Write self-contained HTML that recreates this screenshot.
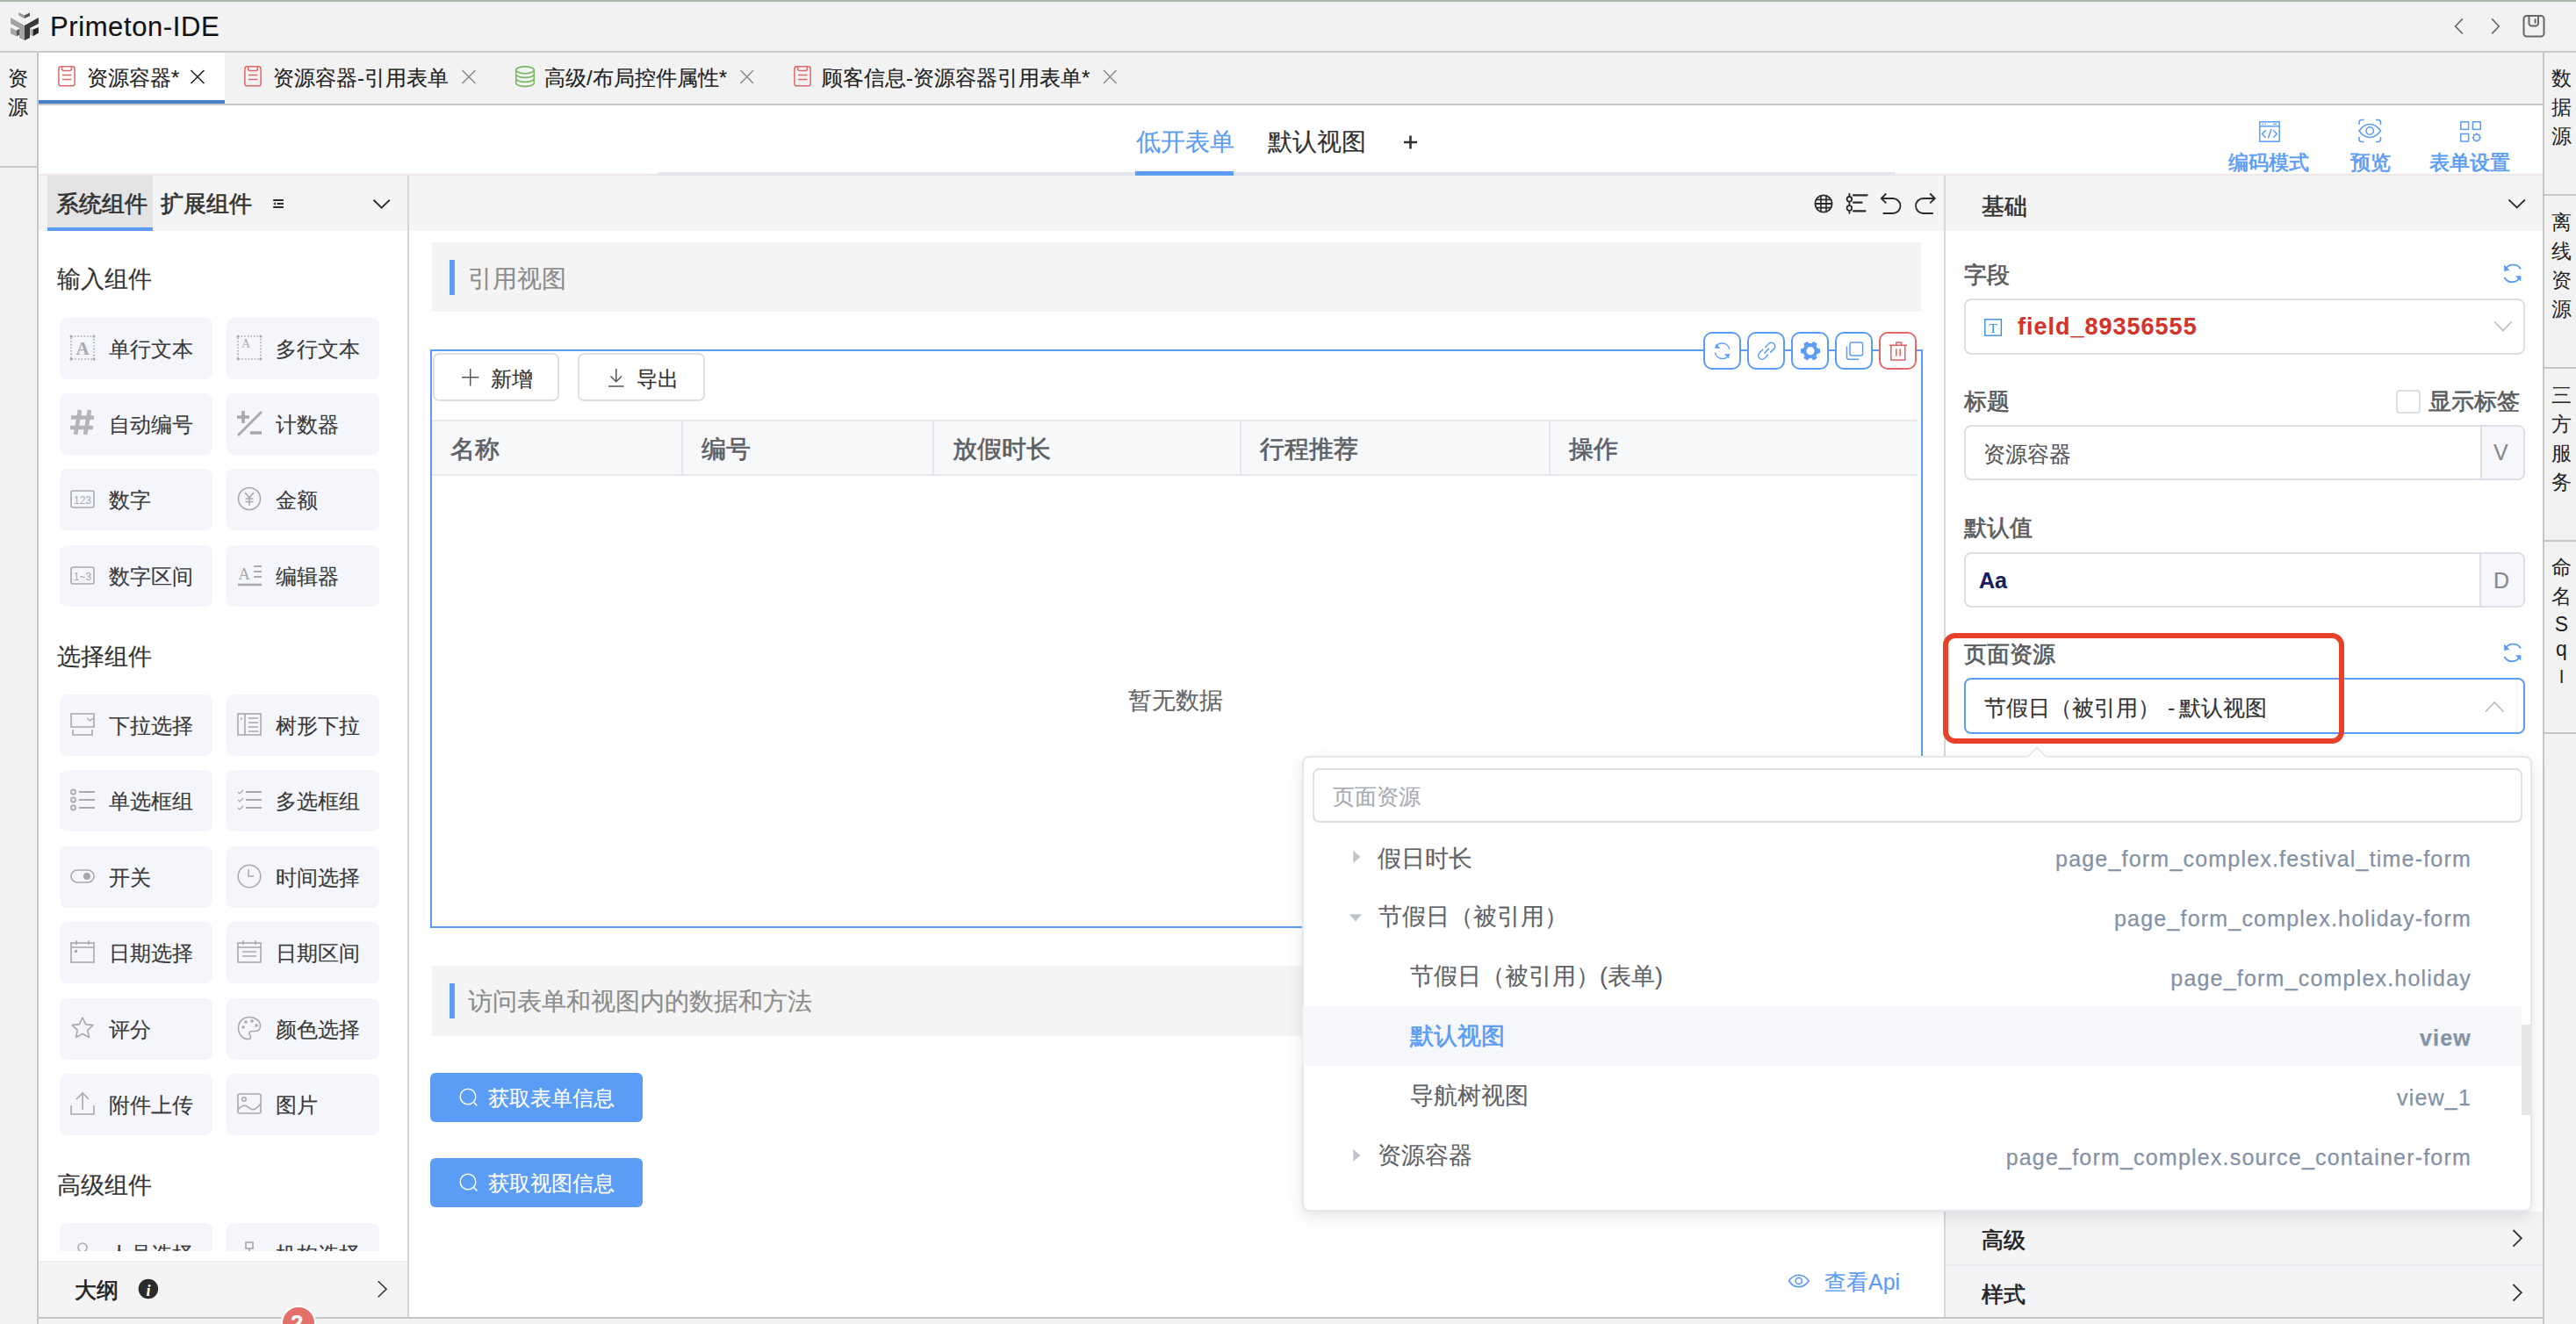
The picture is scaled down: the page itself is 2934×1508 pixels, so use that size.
<!DOCTYPE html>
<html><head><meta charset="utf-8">
<style>
*{box-sizing:border-box;margin:0;padding:0}
html,body{width:2934px;height:1508px;overflow:hidden;background:#f2f2f2;font-family:"Liberation Sans",sans-serif;color:#303133}
.a{position:absolute}
.t{position:absolute;white-space:nowrap;line-height:1;-webkit-text-stroke-width:0.15px}
.sb{font-weight:normal!important;-webkit-text-stroke-width:0.65px!important}
svg{position:absolute;overflow:visible}
.card{position:absolute;width:174px;height:70px;border-radius:8px;background:#f5f6fb}
.card .t{left:56px;top:24px;font-size:24px;color:#3a3a3a}
.card svg{left:12px;top:21px}
.vs{position:absolute;left:2906px;font-size:23px;line-height:33px;width:23px;color:#222;text-align:center}
.ab{position:absolute;top:378px;width:43px;height:43px;border:2px solid #5b9cf6;border-radius:10px;background:#fff}
.lbl{position:absolute;white-space:nowrap;line-height:1;font-size:26px;-webkit-text-stroke-width:0.65px;color:#5a5c60}
.row{position:absolute;left:1484px;width:1388px;height:67.5px}
.rt{position:absolute;right:119px;white-space:nowrap;line-height:1;font-size:25px;letter-spacing:1.2px;-webkit-text-stroke-width:0.25px;color:#8492a6}
</style></head><body>
<!-- top line & title bar -->
<div class="a" style="left:0;top:0;width:2934px;height:2px;background:#a9b8aa"></div>
<div class="a" style="left:0;top:58px;width:2934px;height:2px;background:#c9c9c9"></div>
<div class="t" style="left:57px;top:15px;font-size:31px;letter-spacing:0.6px;color:#111">Primeton-IDE</div>

<!-- left sidebar -->
<div class="a" style="left:42px;top:60px;width:2px;height:1448px;background:#c6c6c6"></div>
<div class="a" style="left:0;top:189px;width:42px;height:2px;background:#c6c6c6"></div>
<div class="t" style="left:9px;top:78px;font-size:23px;color:#222">资</div>
<div class="t" style="left:9px;top:111px;font-size:23px;color:#222">源</div>

<!-- tab bar -->
<div class="a" style="left:44px;top:118px;width:2853px;height:2px;background:#c8c8c8"></div>
<div class="a" style="left:44px;top:60px;width:212px;height:58px;background:#fff"></div>
<div class="a" style="left:44px;top:114px;width:212px;height:4px;background:#4a7fc7"></div>
<div class="t" style="left:99px;top:77px;font-size:24px;color:#222">资源容器*</div>
<div class="t" style="left:311px;top:77px;font-size:24px;color:#222">资源容器-引用表单</div>
<div class="t" style="left:620px;top:77px;font-size:24px;color:#222">高级/布局控件属性*</div>
<div class="t" style="left:936px;top:77px;font-size:24px;color:#222">顾客信息-资源容器引用表单*</div>

<!-- right sidebar -->
<div class="a" style="left:2896px;top:60px;width:2px;height:1448px;background:#c6c6c6"></div>
<div class="a" style="left:2898px;top:221px;width:36px;height:2px;background:#c6c6c6"></div>
<div class="a" style="left:2898px;top:418px;width:36px;height:2px;background:#c6c6c6"></div>
<div class="a" style="left:2898px;top:615px;width:36px;height:2px;background:#c6c6c6"></div>
<div class="a" style="left:2898px;top:834px;width:36px;height:2px;background:#c6c6c6"></div>

<!-- editor header -->
<div class="a" style="left:44px;top:120px;width:2852px;height:80px;background:#fff"></div>
<div class="a" style="left:44px;top:198px;width:705px;height:2px;background:#efe6e6"></div>
<div class="a" style="left:749px;top:196px;width:1410px;height:4px;background:#e4e6ed"></div><div class="a" style="left:2159px;top:198px;width:737px;height:2px;background:#efe6e6"></div>
<div class="a" style="left:1293px;top:195px;width:112px;height:5px;background:#5b9cf6"></div>
<div class="t" style="left:1294px;top:148px;font-size:28px;color:#5b9cf6">低开表单</div>
<div class="t" style="left:1444px;top:148px;font-size:28px;color:#303133">默认视图</div>
<div class="t sb" style="left:2538px;top:174px;font-size:23px;color:#5b9cf6">编码模式</div>
<div class="t sb" style="left:2677px;top:174px;font-size:23px;color:#5b9cf6">预览</div>
<div class="t sb" style="left:2767px;top:174px;font-size:23px;color:#5b9cf6">表单设置</div>

<!-- LEFT PANEL -->
<div class="a" style="left:44px;top:200px;width:420px;height:1300px;background:#fff"></div>
<div class="a" style="left:464px;top:200px;width:2px;height:1300px;background:#d4d4d4"></div>
<div class="a" style="left:44px;top:200px;width:420px;height:63px;background:#f4f4f4"></div>
<div class="a" style="left:54px;top:200px;width:120px;height:63px;background:#e4e4e4"></div>
<div class="a" style="left:54px;top:259px;width:120px;height:4px;background:#5b9cf6"></div>
<div class="t sb" style="left:64px;top:219px;font-size:26px;font-weight:600;color:#333">系统组件</div>
<div class="t sb" style="left:183px;top:219px;font-size:26px;font-weight:600;color:#333">扩展组件</div>
<div class="t" style="left:65px;top:305px;font-size:27px;color:#333">输入组件</div>
<div class="t" style="left:65px;top:735px;font-size:27px;color:#333">选择组件</div>
<div class="t" style="left:65px;top:1337px;font-size:27px;color:#333">高级组件</div>
<div class="card" style="left:68px;top:362px"><div class="t">单行文本</div><svg width="28" height="28" viewBox="0 0 28 28" style="left:12px;top:20px"><rect x="1" y="1" width="26" height="26" stroke="#a9a9ab" fill="none" stroke-width="1.6" stroke-dasharray="1.6 2" stroke-width="1.2"/><circle cx="1" cy="1" r="1.5" fill="#a9a9ab"/><circle cx="27" cy="1" r="1.5" fill="#a9a9ab"/><circle cx="1" cy="27" r="1.5" fill="#a9a9ab"/><circle cx="27" cy="27" r="1.5" fill="#a9a9ab"/><text x="14" y="22" text-anchor="middle" font-family="Liberation Serif" font-weight="bold" font-size="21" fill="#a9a9ab">A</text></svg></div>
<div class="card" style="left:258px;top:362px"><div class="t">多行文本</div><svg width="28" height="28" viewBox="0 0 28 28" style="left:12px;top:20px"><rect x="1" y="1" width="26" height="26" stroke="#a9a9ab" fill="none" stroke-width="1.6" stroke-dasharray="1.6 2" stroke-width="1.2"/><circle cx="1" cy="1" r="1.5" fill="#a9a9ab"/><circle cx="27" cy="1" r="1.5" fill="#a9a9ab"/><circle cx="1" cy="27" r="1.5" fill="#a9a9ab"/><circle cx="27" cy="27" r="1.5" fill="#a9a9ab"/><text x="10" y="14" text-anchor="middle" font-family="Liberation Serif" font-size="14" fill="#a9a9ab">A</text></svg></div>
<div class="card" style="left:68px;top:448px"><div class="t">自动编号</div><svg width="28" height="28" viewBox="0 0 28 28" style="left:12px;top:20px"><path d="M11 -1L6 27M22 -1L17 27M1 7.5H27M0 19H26" stroke="#b5b5b7" stroke-width="4.6"/></svg></div>
<div class="card" style="left:258px;top:448px"><div class="t">计数器</div><svg width="28" height="28" viewBox="0 0 28 28" style="left:12px;top:20px"><path d="M0 7h14M7 0v14" stroke="#a9a9ab" stroke-width="3.6"/><path d="M1 28L28 1" stroke="#a9a9ab" stroke-width="2.8"/><path d="M15 25h13" stroke="#a9a9ab" stroke-width="3.6"/></svg></div>
<div class="card" style="left:68px;top:534px"><div class="t">数字</div><svg width="28" height="28" viewBox="0 0 28 28" style="left:12px;top:20px"><rect x="1" y="5" width="26" height="19" rx="2" stroke="#a9a9ab" fill="none" stroke-width="1.6"/><text x="14" y="19.5" text-anchor="middle" font-family="Liberation Sans" font-size="12" fill="#a9a9ab">123</text></svg></div>
<div class="card" style="left:258px;top:534px"><div class="t">金额</div><svg width="28" height="28" viewBox="0 0 28 28" style="left:12px;top:20px"><circle cx="14" cy="14" r="12.5" stroke="#a9a9ab" fill="none" stroke-width="1.6"/><path d="M9 7l5 6 5-6M14 13v9M9.5 14h9M9.5 17.5h9" stroke="#a9a9ab" stroke-width="1.5" fill="none"/></svg></div>
<div class="card" style="left:68px;top:621px"><div class="t">数字区间</div><svg width="28" height="28" viewBox="0 0 28 28" style="left:12px;top:20px"><rect x="1" y="5" width="26" height="19" rx="2" stroke="#a9a9ab" fill="none" stroke-width="1.6"/><text x="14" y="19.5" text-anchor="middle" font-family="Liberation Sans" font-size="12" fill="#a9a9ab">1~3</text></svg></div>
<div class="card" style="left:258px;top:621px"><div class="t">编辑器</div><svg width="28" height="28" viewBox="0 0 28 28" style="left:12px;top:20px"><text x="8" y="19" text-anchor="middle" font-family="Liberation Serif" font-size="19" fill="#a9a9ab">A</text><path d="M19 4h9M19 10h9M19 16h9" stroke="#a9a9ab" stroke-width="2.2"/><path d="M1 25h27" stroke="#a9a9ab" stroke-width="2.6"/></svg></div>
<div class="card" style="left:68px;top:791px"><div class="t">下拉选择</div><svg width="28" height="28" viewBox="0 0 28 28" style="left:12px;top:20px"><path d="M1 17V2h26v15z" stroke="#a9a9ab" fill="none" stroke-width="1.6"/><path d="M19 7l3.5 3 3.5-3" stroke="#a9a9ab" stroke-width="1.3" fill="none"/><path d="M3 20v6h22v-6" stroke="#a9a9ab" fill="none" stroke-width="1.6"/></svg></div>
<div class="card" style="left:258px;top:791px"><div class="t">树形下拉</div><svg width="28" height="28" viewBox="0 0 28 28" style="left:12px;top:20px"><rect x="1" y="2" width="26" height="24" stroke="#a9a9ab" fill="none" stroke-width="1.6"/><path d="M9 2v24M13 7h11M13 12h11M13 17h11M13 22h11" stroke="#a9a9ab" fill="none" stroke-width="1.6" stroke-width="1.4"/><path d="M4 6l2.5 1.8L4 9.6z" fill="#a9a9ab"/></svg></div>
<div class="card" style="left:68px;top:877px"><div class="t">单选框组</div><svg width="28" height="28" viewBox="0 0 28 28" style="left:12px;top:20px"><circle cx="3.5" cy="5" r="2.6" stroke="#a9a9ab" fill="none" stroke-width="1.6" stroke-width="1.1"/><circle cx="3.5" cy="14" r="2.6" stroke="#a9a9ab" fill="none" stroke-width="1.6" stroke-width="1.1"/><circle cx="3.5" cy="23" r="2.6" stroke="#a9a9ab" fill="none" stroke-width="1.6" stroke-width="1.1"/><path d="M10 5h18M10 14h18M10 23h18" stroke="#a9a9ab" stroke-width="2"/></svg></div>
<div class="card" style="left:258px;top:877px"><div class="t">多选框组</div><svg width="28" height="28" viewBox="0 0 28 28" style="left:12px;top:20px"><path d="M1 5l2 2 4-4M1 14l2 2 4-4M1 23l2 2 4-4" stroke="#a9a9ab" stroke-width="1.2" fill="none"/><path d="M10 5h18M10 14h18M10 23h18" stroke="#a9a9ab" stroke-width="2"/></svg></div>
<div class="card" style="left:68px;top:964px"><div class="t">开关</div><svg width="28" height="28" viewBox="0 0 28 28" style="left:12px;top:20px"><rect x="1" y="7" width="26" height="14" rx="7" stroke="#a9a9ab" fill="none" stroke-width="1.6" stroke-width="1.5"/><circle cx="19" cy="14" r="4" fill="#a9a9ab"/></svg></div>
<div class="card" style="left:258px;top:964px"><div class="t">时间选择</div><svg width="28" height="28" viewBox="0 0 28 28" style="left:12px;top:20px"><circle cx="14" cy="14" r="12.8" stroke="#a9a9ab" fill="none" stroke-width="1.6" stroke-width="1.5"/><path d="M13 6v8h6" stroke="#a9a9ab" fill="none" stroke-width="1.6" stroke-width="1.5"/></svg></div>
<div class="card" style="left:68px;top:1050px"><div class="t">日期选择</div><svg width="28" height="28" viewBox="0 0 28 28" style="left:12px;top:20px"><rect x="1" y="4" width="26" height="22" stroke="#a9a9ab" fill="none" stroke-width="1.6" stroke-width="1.4"/><path d="M1 9h26M7 1v5M21 1v5" stroke="#a9a9ab" fill="none" stroke-width="1.6" stroke-width="1.4"/><rect x="5" y="12" width="3" height="3" fill="#a9a9ab"/></svg></div>
<div class="card" style="left:258px;top:1050px"><div class="t">日期区间</div><svg width="28" height="28" viewBox="0 0 28 28" style="left:12px;top:20px"><rect x="1" y="4" width="26" height="22" stroke="#a9a9ab" fill="none" stroke-width="1.6" stroke-width="1.4"/><path d="M1 9h26M7 1v5M21 1v5M6 14h16M6 19h16" stroke="#a9a9ab" fill="none" stroke-width="1.6" stroke-width="1.4"/></svg></div>
<div class="card" style="left:68px;top:1137px"><div class="t">评分</div><svg width="28" height="28" viewBox="0 0 28 28" style="left:12px;top:20px"><path d="M14 2l3.6 7.6 8.2 1-6 5.7 1.6 8.2L14 20.5l-7.4 4 1.6-8.2-6-5.7 8.2-1z" stroke="#a9a9ab" fill="none" stroke-width="1.6" stroke-width="1.5" stroke-linejoin="round"/></svg></div>
<div class="card" style="left:258px;top:1137px"><div class="t">颜色选择</div><svg width="28" height="28" viewBox="0 0 28 28" style="left:12px;top:20px"><path d="M14 1.5C6.5 1.5 1.5 7 1.5 14c0 7 5 12.5 11 12.5 2 0 3-1.2 3-2.6 0-1.8-1.5-2.4-1.5-4 0-1.5 1.2-2.4 2.8-2.4h3.5c4 0 6.2-2.6 6.2-6.2C26.5 6 21 1.5 14 1.5z" stroke="#a9a9ab" fill="none" stroke-width="1.6" stroke-width="1.5"/><circle cx="7" cy="13" r="1.8" fill="#a9a9ab"/><circle cx="10" cy="7" r="1.8" fill="#a9a9ab"/><circle cx="17" cy="6" r="1.8" fill="#a9a9ab"/><circle cx="22" cy="11" r="1.8" fill="#a9a9ab"/></svg></div>
<div class="card" style="left:68px;top:1223px"><div class="t">附件上传</div><svg width="28" height="28" viewBox="0 0 28 28" style="left:12px;top:20px"><path d="M1 16v10h26V16" stroke="#a9a9ab" fill="none" stroke-width="1.6" stroke-width="2.2"/><path d="M14 21V2M7 9l7-7 7 7" stroke="#a9a9ab" fill="none" stroke-width="1.6" stroke-width="1.6"/></svg></div>
<div class="card" style="left:258px;top:1223px"><div class="t">图片</div><svg width="28" height="28" viewBox="0 0 28 28" style="left:12px;top:20px"><rect x="1" y="3" width="26" height="22" rx="2" stroke="#a9a9ab" fill="none" stroke-width="1.6" stroke-width="1.5"/><circle cx="8" cy="9" r="2.2" stroke="#a9a9ab" fill="none" stroke-width="1.6" stroke-width="1.3"/><path d="M1 21c5-6 9-6 13-2s8 1 13-5" stroke="#a9a9ab" fill="none" stroke-width="1.6" stroke-width="1.5"/></svg></div>
<div class="a" style="left:44px;top:1385px;width:420px;height:40px;overflow:hidden"><div class="card" style="left:24px;top:8px"><div class="t">人员选择</div><svg width="28" height="28" viewBox="0 0 28 28" style="left:12px;top:20px"><circle cx="14" cy="8" r="5" stroke="#a9a9ab" fill="none" stroke-width="1.6"/></svg></div><div class="card" style="left:214px;top:8px"><div class="t">机构选择</div><svg width="28" height="28" viewBox="0 0 28 28" style="left:12px;top:20px"><rect x="10" y="2" width="8" height="7" stroke="#a9a9ab" fill="none" stroke-width="1.6"/><path d="M14 9v5M3 14h22" stroke="#a9a9ab" fill="none" stroke-width="1.6"/></svg></div></div>
<div class="a" style="left:44px;top:1425px;width:420px;height:11px;background:#fff"></div>
<div class="a" style="left:44px;top:1436px;width:420px;height:64px;background:#f4f4f4;border-top:1px solid #eceef4"></div>
<div class="t sb" style="left:85px;top:1457px;font-size:25px;font-weight:600;color:#222">大纲</div>

<!-- CANVAS -->
<div class="a" style="left:466px;top:200px;width:1748px;height:1300px;background:#fff"></div>
<div class="a" style="left:466px;top:200px;width:1748px;height:63px;background:#f4f4f4"></div>
<div class="a" style="left:492px;top:276px;width:1696px;height:79px;background:#f4f4f4"></div>
<div class="a" style="left:512px;top:296px;width:6px;height:40px;background:#5b9cf6"></div>
<div class="t" style="left:533px;top:304px;font-size:28px;color:#8c8c8c">引用视图</div>
<div class="a" style="left:490px;top:398px;width:1700px;height:659px;border:2px solid #5b9cf6"></div>
<div class="a" style="left:493px;top:402px;width:144px;height:55px;border:2px solid #dcdfe6;border-radius:7px"></div>
<div class="t" style="left:559px;top:420px;font-size:24px;color:#333">新增</div>
<div class="a" style="left:658px;top:402px;width:145px;height:55px;border:2px solid #dcdfe6;border-radius:7px"></div>
<div class="t" style="left:725px;top:420px;font-size:24px;color:#333">导出</div>
<div class="a" style="left:492px;top:478px;width:1692px;height:64px;background:#f7f8f9;border-top:2px solid #e6e8eb;border-bottom:2px solid #e6e8eb"></div>
<div class="a" style="left:776px;top:480px;width:2px;height:60px;background:#e6e8eb"></div>
<div class="a" style="left:1062px;top:480px;width:2px;height:60px;background:#e6e8eb"></div>
<div class="a" style="left:1412px;top:480px;width:2px;height:60px;background:#e6e8eb"></div>
<div class="a" style="left:1764px;top:480px;width:2px;height:60px;background:#e6e8eb"></div>
<div class="t sb" style="left:513px;top:498px;font-size:28px;font-weight:600;color:#5c6066">名称</div>
<div class="t sb" style="left:799px;top:498px;font-size:28px;font-weight:600;color:#5c6066">编号</div>
<div class="t sb" style="left:1085px;top:498px;font-size:28px;font-weight:600;color:#5c6066">放假时长</div>
<div class="t sb" style="left:1435px;top:498px;font-size:28px;font-weight:600;color:#5c6066">行程推荐</div>
<div class="t sb" style="left:1787px;top:498px;font-size:28px;font-weight:600;color:#5c6066">操作</div>
<div class="t" style="left:1285px;top:785px;font-size:27px;color:#666">暂无数据</div>
<div class="ab" style="left:1940px"></div>
<div class="ab" style="left:1990px"></div>
<div class="ab" style="left:2040px"></div>
<div class="ab" style="left:2090px"></div>
<div class="ab" style="left:2140px;border-color:#e46a6a"></div>

<div class="a" style="left:492px;top:1100px;width:1696px;height:80px;background:#f4f4f4"></div>
<div class="a" style="left:512px;top:1120px;width:6px;height:40px;background:#5b9cf6"></div>
<div class="t" style="left:533px;top:1127px;font-size:28px;color:#8c8c8c">访问表单和视图内的数据和方法</div>
<div class="a" style="left:490px;top:1222px;width:242px;height:56px;background:#5b9cf6;border-radius:6px"></div>
<div class="t" style="left:556px;top:1239px;font-size:24px;color:#fff">获取表单信息</div>
<div class="a" style="left:490px;top:1319px;width:242px;height:56px;background:#5b9cf6;border-radius:6px"></div>
<div class="t" style="left:556px;top:1336px;font-size:24px;color:#fff">获取视图信息</div>
<div class="t" style="left:2078px;top:1448px;font-size:25px;color:#5b9cf6">查看Api</div>

<!-- PROPS PANEL -->
<div class="a" style="left:2214px;top:200px;width:2px;height:1300px;background:#d8d8d8"></div>
<div class="a" style="left:2216px;top:200px;width:680px;height:1300px;background:#fff"></div>
<div class="a" style="left:2216px;top:200px;width:680px;height:63px;background:#f4f4f4"></div>
<div class="t sb" style="left:2257px;top:222px;font-size:26px;font-weight:600;color:#333">基础</div>
<div class="lbl" style="left:2237px;top:300px">字段</div>
<div class="a" style="left:2237px;top:340px;width:639px;height:64px;border:2px solid #dcdfe6;border-radius:8px"></div>
<div class="t" style="left:2298px;top:359px;font-size:27px;font-weight:bold;letter-spacing:1px;color:#d2332b">field_89356555</div>
<div class="lbl" style="left:2237px;top:444px">标题</div>
<div class="a" style="left:2729px;top:444px;width:28px;height:27px;border:2px solid #dcdfe6;border-radius:4px"></div>
<div class="lbl" style="left:2766px;top:444px">显示标签</div>
<div class="a" style="left:2237px;top:484px;width:639px;height:63px;border:2px solid #dcdfe6;border-radius:8px;overflow:hidden"><div class="a" style="left:586px;top:0;width:51px;height:59px;background:#f5f7fa;border-left:2px solid #dcdfe6"></div></div>
<div class="t" style="left:2259px;top:505px;font-size:25px;color:#555">资源容器</div>
<div class="t" style="left:2840px;top:503px;font-size:25px;color:#888">V</div>
<div class="lbl" style="left:2237px;top:588px">默认值</div>
<div class="a" style="left:2237px;top:629px;width:639px;height:63px;border:2px solid #dcdfe6;border-radius:8px;overflow:hidden"><div class="a" style="left:585px;top:0;width:52px;height:59px;background:#f5f7fa;border-left:2px solid #dcdfe6"></div></div>
<div class="t" style="left:2254px;top:649px;font-size:25px;font-weight:bold;color:#1b1b5a">Aa</div>
<div class="t" style="left:2840px;top:649px;font-size:25px;color:#888">D</div>
<div class="lbl" style="left:2237px;top:732px">页面资源</div>
<div class="a" style="left:2237px;top:772px;width:639px;height:64px;border:2px solid #5b9cf6;border-radius:8px"></div>
<div class="t" style="left:2260px;top:794px;font-size:25px;color:#333">节假日（被引用）<span style="margin:0 5px 0 9px">-</span>默认视图</div>
<div class="a" style="left:2213px;top:721px;width:457px;height:126px;border:6px solid #e8412b;border-radius:14px"></div>

<div class="a" style="left:2216px;top:1380px;width:680px;height:120px;background:#f4f4f6"></div>
<div class="a" style="left:2216px;top:1440px;width:680px;height:2px;background:#e8eaf0"></div>
<div class="t sb" style="left:2257px;top:1400px;font-size:25px;font-weight:600;color:#222">高级</div>
<div class="t sb" style="left:2257px;top:1462px;font-size:25px;font-weight:600;color:#222">样式</div>

<!-- bottom -->
<div class="a" style="left:44px;top:1500px;width:2852px;height:2px;background:#c8c8c8"></div>
<div class="a" style="left:44px;top:1502px;width:2852px;height:6px;background:#f2f2f2"></div>

<!-- right sidebar texts -->
<div class="vs" style="top:73px">数</div>
<div class="vs" style="top:106px">据</div>
<div class="vs" style="top:139px">源</div>
<div class="vs" style="top:237px">离</div>
<div class="vs" style="top:270px">线</div>
<div class="vs" style="top:303px">资</div>
<div class="vs" style="top:336px">源</div>
<div class="vs" style="top:434px">三</div>
<div class="vs" style="top:467px">方</div>
<div class="vs" style="top:500px">服</div>
<div class="vs" style="top:533px">务</div>
<div class="vs" style="top:630px">命</div>
<div class="vs" style="top:663px">名</div>
<div class="vs" style="top:695px">S</div>
<div class="vs" style="top:723px">q</div>
<div class="vs" style="top:754px;font-size:21px">l</div>

<svg width="2934" height="1508" style="left:0;top:0" viewBox="0 0 2934 1508">
<!-- logo -->
<g transform="translate(8,8)">
<path d="M13.3 6.2L19.7 9.5V13L13.3 9.5z" fill="#9a9a9a"/>
<path d="M19.7 9.5L26 6.5V10.2L19.7 13z" fill="#555"/>
<path d="M4.1 12L20 21V38L14 35V24L4.1 19z" fill="#a3a3a3"/>
<path d="M20 21L35.9 12V19L26 24V35L20 38z" fill="#3a3a3a"/>
<path d="M4.1 23.2L10.8 26.7V33.3L4.1 30.2z" fill="#a5a5a5"/>
<path d="M10.8 26.7L14 25V31.7L10.8 33.3z" fill="#555"/>
<path d="M26.3 24.1L29.5 25.7V33.3L26.3 31.7z" fill="#b0b0b0"/>
<path d="M29.5 25.7L35.9 22.9V29.5L29.5 33.3z" fill="#222"/>
</g>
<!-- title right icons -->
<path d="M2804.8 21.4L2796.6 30L2804.8 38.4M2838.1 21.4L2846.3 30L2838.1 38.4" stroke="#666" stroke-width="1.6" fill="none"/>
<rect x="2874.5" y="18" width="23" height="23.6" rx="3.5" stroke="#666" stroke-width="2" fill="none"/>
<path d="M2880.5 18.5V26.5a3 3 0 0 0 3 3H2888a3 3 0 0 0 3-3V18.5" stroke="#666" stroke-width="2" fill="none"/>
<path d="M2887.6 22.3v3.4" stroke="#666" stroke-width="2" stroke-linecap="round"/>
<!-- tab icons: doc red -->
<g id="doc" stroke="#e06868" stroke-width="1.5" fill="none">
<rect x="66.9" y="75.8" width="18.2" height="22" rx="2.6"/>
<path d="M70.6 76v2.6a1.8 1.8 0 0 0 1.8 1.8h7.2a1.8 1.8 0 0 0 1.8-1.8V76M71 85.4h10.4M71 90.5h10.4"/>
</g>
<use href="#doc" x="212" y="0"/>
<use href="#doc" x="838" y="0"/>
<!-- db green -->
<g stroke="#7ab862" stroke-width="1.6" fill="none">
<ellipse cx="598" cy="79.8" rx="10.3" ry="3.9"/>
<path d="M587.7 79.8V94.5c0 2.2 4.6 3.9 10.3 3.9s10.3-1.7 10.3-3.9V79.8M587.7 84.5c0 2.2 4.6 3.9 10.3 3.9s10.3-1.7 10.3-3.9M587.7 89.5c0 2.2 4.6 3.9 10.3 3.9s10.3-1.7 10.3-3.9"/>
</g>
<!-- X icons -->
<path d="M217.5 80L232.5 95M232.5 80L217.5 95" stroke="#222" stroke-width="1.6"/>
<path d="M526.5 80L541.5 95M541.5 80L526.5 95" stroke="#8a8a8a" stroke-width="1.5"/>
<path d="M843.5 80L858 95M858 80L843.5 95" stroke="#8a8a8a" stroke-width="1.5"/>
<path d="M1257 80L1271.5 95M1271.5 80L1257 95" stroke="#8a8a8a" stroke-width="1.5"/>
<!-- view + -->
<path d="M1599 162h15M1606.5 154.5v15" stroke="#303133" stroke-width="2.6"/>
<!-- code icon -->
<g stroke="#5b9cf6" stroke-width="1.5" fill="none">
<rect x="2573.8" y="138.8" width="22.4" height="22.4"/>
<path d="M2573.8 143.8h22.4M2580.7 148.3l-4.2 4.2 4.2 4.2M2589.1 148.3l4.2 4.2-4.2 4.2M2587 147.3l-3.7 10.2"/>
</g>
<path d="M2576.5 141.3h1.5M2579.5 141.3h1.5M2589 141.3h4" stroke="#5b9cf6" stroke-width="1.2"/>
<!-- eye icon -->
<g stroke="#5b9cf6" stroke-width="1.6" fill="none">
<path d="M2687 142v-2.5a3 3 0 0 1 3-3h2.5M2706 136.5h2.5a3 3 0 0 1 3 3v2.5M2711.5 156v2.5a3 3 0 0 1-3 3h-2.5M2692.5 161.5h-2.5a3 3 0 0 1-3-3v-2.5"/>
<path d="M2687 149c3.5-5 7.5-7.5 12.2-7.5s8.7 2.5 12.3 7.5c-3.6 5-7.6 7.5-12.3 7.5s-8.7-2.5-12.2-7.5z"/>
<circle cx="2699.2" cy="149" r="4.2"/>
</g>
<!-- grid icon -->
<g stroke="#5b9cf6" stroke-width="1.5" fill="none">
<rect x="2802.8" y="138.8" width="8.8" height="8.6"/>
<rect x="2816.4" y="138.8" width="8.8" height="8.6"/>
<rect x="2802.8" y="152.4" width="8.8" height="8.6"/>
<circle cx="2820.8" cy="156.7" r="3.6"/>
</g>
<path d="M2820.8 151.6v1.6M2820.8 160.2v1.6M2815.7 156.7h1.6M2824.3 156.7h1.6M2817.2 153.1l1.1 1.1M2823.3 159.2l1.1 1.1M2817.2 160.3l1.1-1.1M2823.3 154.2l1.1-1.1" stroke="#5b9cf6" stroke-width="1.5"/>
<!-- left panel header icons -->
<path d="M311.2 228h11.7M315.5 232h7.4M311.2 236h11.7" stroke="#2a2a2a" stroke-width="2"/>
<path d="M311.3 232l2.6-2v4z" fill="#2a2a2a"/>
<path d="M425.5 227.7l9.1 8.9 9.2-8.9" stroke="#333" stroke-width="2" fill="none"/>
<!-- outline bar -->
<circle cx="168.9" cy="1468" r="11.2" fill="#2b2b2b"/>
<text x="169" y="1476" text-anchor="middle" font-family="Liberation Serif" font-style="italic" font-weight="bold" font-size="18" fill="#fff">i</text>
<path d="M430.7 1459.3l9.3 9 -9.3 9" stroke="#333" stroke-width="1.6" fill="none"/>
<!-- canvas toolbar -->
<g stroke="#2a2a2a" stroke-width="1.8" fill="none">
<circle cx="2077" cy="232" r="9.6"/>
<path d="M2074 222.8V241.2M2080 222.8V241.2" stroke-width="1.6"/>
<path d="M2067.4 232h19.2M2068.5 227.3h17M2068.5 236.7h17"/>
<path d="M2106.4 220v23.6"/>
<path d="M2111 222.3h15.6M2111 230.7h9.5M2111 240.3h13.5" stroke-width="2.2" stroke-linecap="round"/>
<path d="M2148.3 220.5l-5.6 5.5 5.6 5.4M2143 226h13a8.5 8.5 0 0 1 0 17h-11.3"/>
<path d="M2198.2 220.5l5.6 5.5-5.6 5.4M2203.5 226h-13a8.5 8.5 0 0 0 0 17h11.3"/>
</g>
<circle cx="2106.4" cy="226.8" r="2.8" fill="#f4f4f4" stroke="#2a2a2a" stroke-width="1.8"/>
<circle cx="2106.4" cy="237" r="2.8" fill="#f4f4f4" stroke="#2a2a2a" stroke-width="1.8"/>
<!-- table button icons -->
<path d="M526 429.8h19.4M535.7 420.1v19.4" stroke="#555" stroke-width="1.5"/>
<path d="M701.8 420v14.5M695.5 428.5l6.3 6.2 6.3-6.2M693 440h17.6" stroke="#555" stroke-width="1.5" fill="none"/>
<!-- action button icons -->
<g stroke="#5b9cf6" stroke-width="1.5" fill="none">
<path d="M1953.6 396.5a8.4 8.4 0 0 1 16.2 1.5M1969.8 403a8.4 8.4 0 0 1-16.2-1.5"/>
<g transform="translate(2012.2,399.7) rotate(-45)"><path d="M-1.5 -4.2H-7.5a4.2 4.2 0 0 0 0 8.4H-1.5M1.5 -4.2H7.5a4.2 4.2 0 0 1 0 8.4H1.5M-4 0H4"/></g>
<rect x="2107" y="390" width="14.6" height="15" rx="2.2"/>
<path d="M2103.5 394.5v12.5a2.2 2.2 0 0 0 2.2 2.2h11.5"/>
</g>
<path d="M1954.2 391.5v5.3h5.2zM1969.2 408.5v-5.3h-5.2z" fill="#5b9cf6"/>
<g transform="translate(2062,399.7)"><path d="M10.56 -2.25 L10.56 2.25 L7.80 2.53 L6.09 5.49 L7.23 8.03 L3.34 10.27 L1.70 8.02 L-1.70 8.02 L-3.34 10.27 L-7.23 8.03 L-6.09 5.49 L-7.80 2.53 L-10.56 2.25 L-10.56 -2.25 L-7.80 -2.53 L-6.09 -5.49 L-7.23 -8.03 L-3.34 -10.27 L-1.70 -8.02 L1.70 -8.02 L3.34 -10.27 L7.23 -8.03 L6.09 -5.49 L7.80 -2.53z" fill="#5b9cf6" stroke="#5b9cf6" stroke-width="1" stroke-linejoin="round"/><circle r="4.6" fill="#fff"/></g>
<g stroke="#e06060" stroke-width="1.5" fill="none">
<path d="M2151.8 393.3h20.3M2159.8 393.3v-3.3h5.9v3.3M2153.8 393.3v16.8h15.9v-16.8M2159.8 397.2v8.5M2164.2 397.2v8.5"/>
</g>
<!-- blue buttons search -->
<g stroke="#fff" stroke-width="1.5" fill="none">
<circle cx="533" cy="1249" r="8.8"/><path d="M539.8 1255.8l3.6 3.6"/>
<circle cx="533" cy="1346" r="8.8"/><path d="M539.8 1352.8l3.6 3.6"/>
</g>
<!-- view api eye -->
<g stroke="#5b9cf6" stroke-width="1.6" fill="none">
<path d="M2037.5 1459c3-4.5 6.8-6.8 11.3-6.8s8.3 2.3 11.3 6.8c-3 4.5-6.8 6.8-11.3 6.8s-8.3-2.3-11.3-6.8z"/>
<circle cx="2048.8" cy="1459" r="3.6"/>
</g>
<!-- props -->
<path d="M2857.5 227.5l9.2 9 9.2-9" stroke="#333" stroke-width="1.8" fill="none"/>
<g id="rf"><path d="M2853 309a9.8 9.8 0 0 1 18-2.5M2870.5 314.5a9.8 9.8 0 0 1-18 1.5" stroke="#5b9cf6" stroke-width="1.8" fill="none"/>
<path d="M2852.2 301.5v6.8h6.6zM2871.3 320.5v-6.3h-6.4z" fill="#5b9cf6"/></g>
<use href="#rf" x="0" y="432"/>
<rect x="2260.8" y="363.8" width="18.6" height="18.4" stroke="#3a8de0" stroke-width="1.4" fill="none"/>
<text x="2270" y="379" text-anchor="middle" font-family="Liberation Serif" font-size="15" fill="#3a8de0">T</text>
<path d="M2841 366.3l9.9 10.2 9.8-10.2" stroke="#bbb" stroke-width="1.6" fill="none"/>
<path d="M2831 810.5l10.2-10.5 10.2 10.5" stroke="#bbb" stroke-width="1.6" fill="none"/>
<path d="M2862.5 1401l9.3 9.3-9.3 9.3M2862.5 1463l9.3 9.3-9.3 9.3" stroke="#333" stroke-width="1.8" fill="none"/>
</svg>
<!-- badge -->
<div class="a" style="left:320px;top:1487px;width:40px;height:40px;border-radius:50%;background:#e37169;border:2px solid #fff"></div><div class="t" style="left:331px;top:1494px;font-size:26px;font-weight:bold;color:#fff">2</div>
<!-- POPOVER -->
<div class="a" style="left:1483px;top:861px;width:1401px;height:519px;background:#fff;border:2px solid #e4e7ed;border-radius:8px;box-shadow:0 6px 18px rgba(0,0,0,0.10)"></div>
<div class="a" style="left:1495px;top:875px;width:1378px;height:62px;border:2px solid #dcdfe6;border-radius:8px"></div>
<div class="t" style="left:1518px;top:895px;font-size:25px;color:#a8abb2">页面资源</div>
<div class="a" style="left:1484px;top:1146px;width:1388px;height:67.5px;background:#f5f7fa"></div>
<div class="t" style="left:1569px;top:965px;font-size:27px;color:#606266">假日时长</div>
<div class="t" style="left:1570px;top:1031px;font-size:27px;color:#606266">节假日（被引用）</div>
<div class="t" style="left:1606px;top:1099px;font-size:27px;color:#606266">节假日（被引用）(表单)</div>
<div class="t sb" style="left:1606px;top:1167px;font-size:27px;font-weight:600;color:#5b9cf6">默认视图</div>
<div class="t" style="left:1606px;top:1235px;font-size:27px;color:#606266">导航树视图</div>
<div class="t" style="left:1569px;top:1303px;font-size:27px;color:#606266">资源容器</div>
<div class="rt" style="top:966px">page_form_complex.festival_time-form</div>
<div class="rt" style="top:1034px">page_form_complex.holiday-form</div>
<div class="rt" style="top:1102px">page_form_complex.holiday</div>
<div class="rt" style="top:1170px;font-weight:bold">view</div>
<div class="rt" style="top:1238px">view_1</div>
<div class="rt" style="top:1306px">page_form_complex.source_container-form</div>
<div class="a" style="left:2872px;top:1167px;width:12px;height:103px;background:#e6e6e6"></div>
<svg width="2934" height="1508" style="left:0;top:0" viewBox="0 0 2934 1508">
<path d="M2309.5 862L2320 851.5L2330.5 862" fill="#fff" stroke="#e4e7ed" stroke-width="1.6"/>
<path d="M2308.5 863h23" stroke="#fff" stroke-width="2"/>
<path d="M1541.3 969L1549.6 975.9L1541.3 982.7z" fill="#c0c4cc"/>
<path d="M1536.8 1041.2H1551.1L1544 1049.5z" fill="#c0c4cc"/>
<path d="M1541.3 1309L1549.6 1315.9L1541.3 1322.7z" fill="#c0c4cc"/>
</svg>
</body></html>
